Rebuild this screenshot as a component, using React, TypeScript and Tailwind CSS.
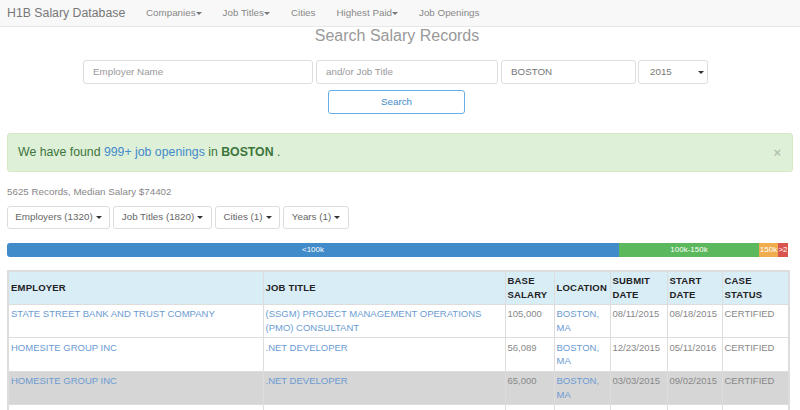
import React from 'react';

const navItems = [
  { label: 'Companies', caret: true },
  { label: 'Job Titles', caret: true },
  { label: 'Cities', caret: false },
  { label: 'Highest Paid', caret: true },
  { label: 'Job Openings', caret: false },
];

const filters = [
  { label: 'Employers (1320)', width: 'w-[103px]' },
  { label: 'Job Titles (1820)', width: 'w-[99px]' },
  { label: 'Cities (1)', width: 'w-[65px]' },
  { label: 'Years (1)', width: 'w-[66px]' },
];

const rows = [
  { employer: 'STATE STREET BANK AND TRUST COMPANY', title: '(SSGM) PROJECT MANAGEMENT OPERATIONS (PMO) CONSULTANT', salary: '105,000', submit: '08/11/2015', start: '08/18/2015', grey: false },
  { employer: 'HOMESITE GROUP INC', title: '.NET DEVELOPER', salary: '56,089', submit: '12/23/2015', start: '05/11/2016', grey: false },
  { employer: 'HOMESITE GROUP INC', title: '.NET DEVELOPER', salary: '65,000', submit: '03/03/2015', start: '09/02/2015', grey: true },
];

function Caret({ className }: { className: string }) {
  return <span className={`inline-block w-0 h-0 align-middle border-x-[3px] border-x-transparent border-t-[3px] ${className}`} />;
}

function App() {
  const th = 'border border-[#ddd] pl-[2px] pr-0 py-0 text-left align-middle font-bold leading-[13.5px] text-[#222] tracking-[0.2px]';
  const td = 'border border-[#ddd] pl-[2px] pr-0 pt-[2.5px] pb-[2.5px] align-top leading-[13.5px]';
  const link = 'text-[#6b9bd2]';
  const input = 'h-[24px] bg-white border border-[#ddd] rounded-[3px] px-[9px] pt-[1px] flex items-center';

  return (
    <div className="w-[800px] h-[410px] overflow-hidden bg-white text-[9.8px] text-[#888] font-['Liberation_Sans',Arial,sans-serif]">
      <nav className="h-[27px] bg-[#f8f8f8] border-b border-[#e7e7e7] flex items-center pl-[7px]">
        <span className="text-[12.3px] text-[#777] w-[139px]">H1B Salary Database</span>
        <div className="flex gap-[21px] text-[#888]">
          {navItems.map((item) => (
            <span key={item.label} className="flex items-center">
              {item.label}
              {item.caret && <Caret className="border-t-[#777]" />}
            </span>
          ))}
        </div>
      </nav>

      <h1 className="text-center text-[16px] leading-[18px] text-[#999] ml-[-6px]">Search Salary Records</h1>

      <div className="flex pl-[83px] mt-[15px] gap-[3px] text-[#999]">
        <div className={`${input} w-[230px]`}>Employer Name</div>
        <div className={`${input} w-[182px]`}>and/or Job Title</div>
        <div className={`${input} w-[135px] text-[#777]`}>BOSTON</div>
        <div className={`${input} w-[70px] text-[#777] justify-between pl-[11px] pr-[3px] ml-[-1px] border-[#ccc]`}>
          2015
          <Caret className="border-t-[#333]" />
        </div>
      </div>

      <div className="flex justify-center mt-[6px] pr-[7px]">
        <div className="w-[137px] h-[24px] flex items-center justify-center border border-[#66afe9] rounded-[3px] text-[#428bca]">Search</div>
      </div>

      <div className="mx-[7px] mt-[19px] h-[39px] bg-[#dff0d8] border border-[#d6e9c6] rounded-[3px] flex items-center justify-between pl-[10px] pr-[10px] text-[12.3px] text-[#3c763d]">
        <span>
          We have found <span className="text-[#428bca]">999+ job openings</span> in <b>BOSTON</b> .
        </span>
        <span className="text-[13px] font-bold text-[#b5c4ae] mr-[1px]">×</span>
      </div>

      <p className="mx-[7px] mt-[14px] leading-[12px] text-[#888]">5625 Records, Median Salary $74402</p>

      <div className="flex mx-[7px] mt-[8px] gap-[3px]">
        {filters.map((f) => (
          <div key={f.label} className={`${f.width} h-[23px] flex items-center justify-center border border-[#ddd] rounded-[3px] text-[#666]`}>
            {f.label}
            <Caret className="border-t-[#333] ml-[3px]" />
          </div>
        ))}
      </div>

      <div className="mx-[7px] mt-[14px] h-[14px] flex rounded-[3px] overflow-hidden text-[8px] leading-[14px] text-white text-center">
        <div className="w-[612px] bg-[#428bca]">&lt;100k</div>
        <div className="w-[140px] bg-[#5cb85c]">100k-150k</div>
        <div className="w-[19px] bg-[#f0ad4e] overflow-hidden">150k</div>
        <div className="w-[10px] bg-[#d9534f] overflow-hidden whitespace-nowrap">&gt;2</div>
      </div>

      <table className="mt-[13px] ml-[7px] w-[781px] table-fixed border-collapse border-2 border-[#ddd] text-[9.5px]">
        <colgroup>
          <col className="w-[255px]" />
          <col className="w-[242px]" />
          <col className="w-[49px]" />
          <col className="w-[56px]" />
          <col className="w-[57px]" />
          <col className="w-[55px]" />
          <col className="w-[67px]" />
        </colgroup>
        <thead>
          <tr className="h-[33px] bg-[#d9edf7]">
            <th className={th}>EMPLOYER</th>
            <th className={th}>JOB TITLE</th>
            <th className={th}>BASE SALARY</th>
            <th className={th}>LOCATION</th>
            <th className={th}>SUBMIT DATE</th>
            <th className={th}>START DATE</th>
            <th className={th}>CASE STATUS</th>
          </tr>
        </thead>
        <tbody>
          {rows.map((r, i) => (
            <tr key={i} className={`h-[33.5px] ${r.grey ? 'bg-[#d6d6d6]' : 'bg-white'}`}>
              <td className={`${td} ${link}`}>{r.employer}</td>
              <td className={`${td} ${link}`}>{r.title}</td>
              <td className={td}>{r.salary}</td>
              <td className={`${td} ${link}`}>BOSTON, MA</td>
              <td className={`${td} whitespace-nowrap`}>{r.submit}</td>
              <td className={`${td} whitespace-nowrap`}>{r.start}</td>
              <td className={td}>CERTIFIED</td>
            </tr>
          ))}
          <tr className="h-[34px] bg-white">
            <td className={td} />
            <td className={td} />
            <td className={td} />
            <td className={td} />
            <td className={td} />
            <td className={td} />
            <td className={td} />
          </tr>
        </tbody>
      </table>
    </div>
  );
}

export default App;
